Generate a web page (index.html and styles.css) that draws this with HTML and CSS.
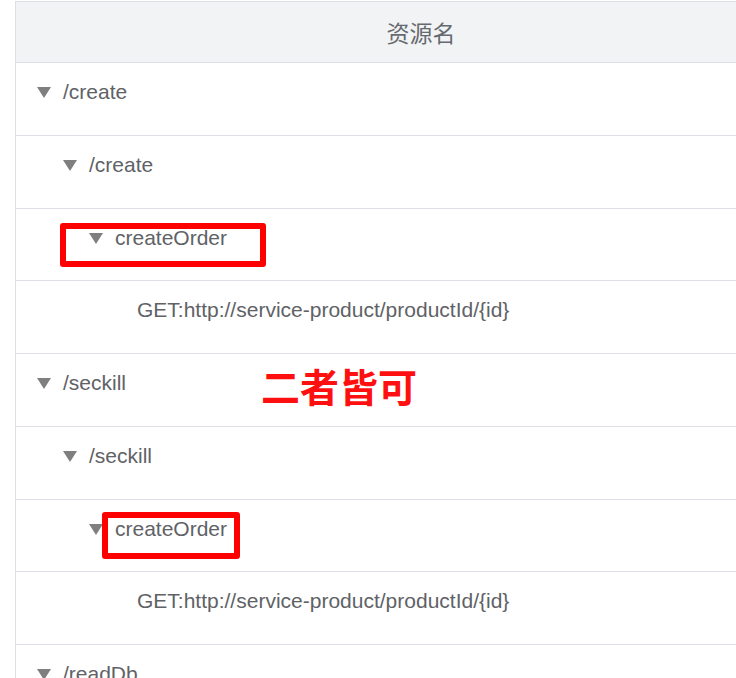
FILE: index.html
```html
<!DOCTYPE html>
<html lang="zh">
<head>
<meta charset="utf-8">
<title>资源名</title>
<link rel="stylesheet" href="styles.css">
</head>
<body>
<div class="table">
  <div class="head">资源名</div>
  <div class="row lv0"><span class="tri"></span><span class="txt">/create</span></div>
  <div class="row lv1"><span class="tri"></span><span class="txt">/create</span></div>
  <div class="row lv2"><span class="tri"></span><span class="txt">createOrder</span><span class="mark mark1"></span></div>
  <div class="row lv3"><span class="txt">GET:http://service-product/productId/{id}</span></div>
  <div class="row lv0"><span class="tri"></span><span class="txt">/seckill</span><span class="note">二者皆可</span></div>
  <div class="row lv1"><span class="tri"></span><span class="txt">/seckill</span></div>
  <div class="row lv2"><span class="tri"></span><span class="txt">createOrder</span><span class="mark mark2"></span></div>
  <div class="row lv3"><span class="txt">GET:http://service-product/productId/{id}</span></div>
  <div class="row lv0"><span class="tri"></span><span class="txt">/readDb</span></div>
</div>
</body>
</html>
```
FILE: styles.css
```css
html, body {
  margin: 0;
  padding: 0;
  background: #ffffff;
  overflow: hidden;
}
body {
  font-family: "Liberation Sans", Arial, "Noto Sans CJK SC", sans-serif;
  color: #606266;
}
.table {
  margin-left: 15px;
  margin-top: 1px;
  width: 900px;
  border-left: 1px solid #dcdfe6;
}
.head {
  height: 60px;
  border-top: 1px solid #dcdfe6;
  border-bottom: 1px solid #dcdfe6;
  background: #f2f3f5;
  display: flex;
  align-items: center;
  justify-content: center;
  padding-right: 90px;
  font-family: "Noto Sans CJK SC", sans-serif;
  font-size: 23px;
  color: #666a70;
}
.row {
  position: relative;
  height: 71.75px;
  box-sizing: content-box;
  border-bottom: 1px solid #dcdfe6;
  display: flex;
  align-items: flex-start;
  font-size: 21px;
  line-height: 24px;
}
.row .tri,
.row .txt {
  margin-top: 17px;
}
.tri {
  width: 0;
  height: 0;
  border-left: 7px solid transparent;
  border-right: 7px solid transparent;
  border-top: 11px solid #7f7f7f;
  margin-right: 12px;
  position: relative;
  top: 7px;
}
.lv0 { padding-left: 21px; }
.lv1 { padding-left: 47px; }
.lv2 { padding-left: 73px; }
.lv3 { padding-left: 121px; }
.mark {
  position: absolute;
  border: 6px solid #ff0000;
  border-radius: 3px;
  box-sizing: border-box;
}
.mark1 {
  left: 44px;
  top: 14px;
  width: 206px;
  height: 44px;
}
.mark2 {
  left: 86px;
  top: 12px;
  width: 138px;
  height: 47px;
}
.note {
  position: absolute;
  left: 245px;
  top: 12px;
  font-family: "Noto Sans CJK SC", sans-serif;
  font-weight: 700;
  font-size: 39px;
  line-height: 39px;
  color: #ff1010;
}
```
